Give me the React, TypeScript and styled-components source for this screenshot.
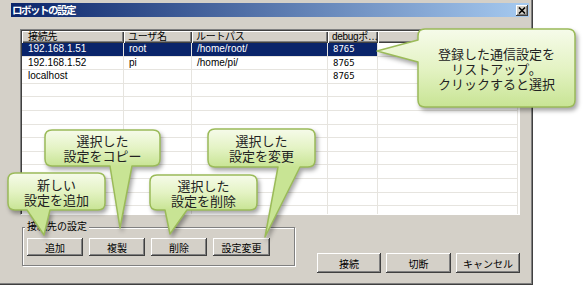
import { Fragment } from "react";
import styled, { createGlobalStyle } from "styled-components";

const GlobalStyle = createGlobalStyle`
  html, body {
    margin: 0;
    padding: 0;
    background: #ffffff;
    overflow: hidden;
  }
  body {
    font-family: "Liberation Sans", "Noto Sans CJK JP", sans-serif;
  }
`;

interface Entry {
  host: string;
  user: string;
  path: string;
  port: string;
}

const entries: Entry[] = [
  { host: "192.168.1.51", user: "root", path: "/home/root/", port: "8765" },
  { host: "192.168.1.52", user: "pi", path: "/home/pi/", port: "8765" },
  { host: "localhost", user: "", path: "", port: "8765" },
];

const columns = ["接続先", "ユーザ名", "ルートパス", "debugポ…", ""];
const EMPTY_ROWS = 10;

interface CalloutSpec {
  x: number;
  y: number;
  w: number;
  h: number;
  side: "left" | "bottom";
  a: number;
  b: number;
  tip: [number, number];
  lines: string[];
}

const callouts: CalloutSpec[] = [
  {
    x: 418, y: 29, w: 157, h: 78, side: "left", a: 11, b: 33, tip: [-41, 22],
    lines: ["登録した通信設定を", "リストアップ。", "クリックすると選択"],
  },
  {
    x: 45, y: 130, w: 115, h: 36, side: "bottom", a: 65, b: 87, tip: [75, 98],
    lines: ["選択した", "設定をコピー"],
  },
  {
    x: 208, y: 129, w: 107, h: 38, side: "bottom", a: 70, b: 92, tip: [57, 108],
    lines: ["選択した", "設定を変更"],
  },
  {
    x: 8, y: 173, w: 97, h: 37, side: "bottom", a: 19, b: 42, tip: [36, 62],
    lines: ["新しい", "設定を追加"],
  },
  {
    x: 150, y: 175, w: 107, h: 35, side: "bottom", a: 15, b: 37, tip: [20, 59],
    lines: ["選択した", "設定を削除"],
  },
];

// rounded box with a pointer tail
const bubblePath = ({ w, h, side, a, b, tip }: CalloutSpec, r = 7) => {
  const [tx, ty] = tip;
  const top = `M${r},0 H${w - r} Q${w},0 ${w},${r} V${h - r} Q${w},${h} ${w - r},${h}`;
  if (side === "bottom") {
    return `${top} H${b} L${tx},${ty} L${a},${h} H${r} Q0,${h} 0,${h - r} V${r} Q0,0 ${r},0 Z`;
  }
  return `${top} H${r} Q0,${h} 0,${h - r} V${b} L${tx},${ty} L0,${a} V${r} Q0,0 ${r},0 Z`;
};

const Callout = ({ spec, id }: { spec: CalloutSpec; id: string }) => (
  <Bubble $x={spec.x} $y={spec.y} $w={spec.w} $h={spec.h}>
    <BubbleShape width={spec.w} height={spec.h}>
      <defs>
        <linearGradient id={id} x1="0" y1="0" x2="0" y2={spec.h} gradientUnits="userSpaceOnUse">
          <stop offset="0" stopColor="#f6fbea" />
          <stop offset="0.5" stopColor="#e4f3c4" />
          <stop offset="1" stopColor="#c8e494" />
        </linearGradient>
      </defs>
      <path d={bubblePath(spec)} fill={`url(#${id})`} stroke="#9bbb59" strokeWidth="1.5" strokeLinejoin="round" />
    </BubbleShape>
    <BubbleText>
      {spec.lines.map((line, i) => (
        <Fragment key={line}>
          {i > 0 && <br />}
          {line}
        </Fragment>
      ))}
    </BubbleText>
  </Bubble>
);

const CloseIcon = () => (
  <svg width="8" height="7" viewBox="0 0 8 7">
    <path d="M1 0.5 L7 6.5 M7 0.5 L1 6.5" stroke="#000" strokeWidth="1.6" />
  </svg>
);

const App = () => {
  return (
    <>
      <GlobalStyle />
      <Window>
        <TitleBar>
          <Title>ロボットの設定</Title>
          <CloseButton>
            <CloseIcon />
          </CloseButton>
        </TitleBar>

        <ListView>
          <HeaderRow>
            {columns.map((c, i) => (
              <HeaderCell key={i} $first={i === 0}>
                {c}
              </HeaderCell>
            ))}
          </HeaderRow>
          {entries.map((e, r) => (
            <Row key={e.host}>
              <Cell $first $selected={r === 0}>{e.host}</Cell>
              <Cell $selected={r === 0}>{e.user}</Cell>
              <Cell $selected={r === 0}>{e.path}</Cell>
              <Cell $selected={r === 0} $mono>{e.port}</Cell>
              <Cell />
            </Row>
          ))}
          {Array.from({ length: EMPTY_ROWS }).map((_, r) => (
            <Row key={`empty-${r}`}>
              <Cell $first />
              <Cell />
              <Cell />
              <Cell />
              <Cell />
            </Row>
          ))}
        </ListView>

        <BottomArea>
          <GroupBox>
            <GroupLabel>接続先の設定</GroupLabel>
            <GroupButtons>
              <WinButton $w={56} $h={18}>追加</WinButton>
              <WinButton $w={56} $h={18}>複製</WinButton>
              <WinButton $w={56} $h={18}>削除</WinButton>
              <WinButton $w={57} $h={18}>設定変更</WinButton>
            </GroupButtons>
          </GroupBox>
          <DialogButtons>
            <WinButton $w={64} $h={20}>接続</WinButton>
            <WinButton $w={65} $h={20}>切断</WinButton>
            <WinButton $w={64} $h={20}>キャンセル</WinButton>
          </DialogButtons>
        </BottomArea>

        {callouts.map((c, i) => (
          <Callout key={i} spec={c} id={`bubble-grad-${i}`} />
        ))}
      </Window>
    </>
  );
};

export default App;

const Window = styled.div`
  position: relative;
  width: 533px;
  height: 285px;
  background: #d4d0c8;
  box-shadow: inset -1px -1px 0 #404040, inset -2px -2px 0 #808080;
  display: flex;
  flex-direction: column;
`;

const TitleBar = styled.div`
  margin: 3px 4px 0 11px;
  height: 14px;
  background: linear-gradient(to right, #0a246a, #a6caf0);
  display: flex;
  align-items: center;
  justify-content: space-between;
  padding: 0 1px 0 1px;
`;

const Title = styled.span`
  color: #ffffff;
  font-family: "Noto Sans CJK JP", sans-serif;
  font-size: 10.5px;
  font-weight: 700;
  letter-spacing: -1.5px;
  line-height: 14px;
`;

const CloseButton = styled.div`
  width: 12px;
  height: 11px;
  background: #d4d0c8;
  box-shadow: inset -1px -1px 0 #404040, inset 1px 1px 0 #ffffff, inset -2px -2px 0 #808080;
  display: flex;
  align-items: center;
  justify-content: center;
`;

const ListView = styled.div`
  margin: 12px 0 0 20px;
  width: 500px;
  height: 186px;
  box-sizing: border-box;
  border: 1px solid;
  border-color: #808080 #ffffff #ffffff #808080;
  box-shadow: inset 1px 1px 0 #404040;
  padding: 1px 1px 0 1px;
  background: #ffffff;
  overflow: hidden;
`;

const gridColumns = `
  display: grid;
  grid-template-columns: 102px 68px 136px 50px 140px;
`;

const HeaderRow = styled.div`
  ${gridColumns}
  height: 12px;
`;

const HeaderCell = styled.div<{ $first?: boolean }>`
  box-sizing: border-box;
  background: #d4d0c8;
  box-shadow: inset 1px 1px 0 #ffffff, inset -1px -1px 0 #404040, inset -2px -2px 0 #808080;
  padding: 0 0 0 ${({ $first }) => ($first ? 6 : 4)}px;
  font-size: 10px;
  letter-spacing: -0.3px;
  line-height: 12px;
  color: #000000;
  white-space: nowrap;
`;

const Row = styled.div`
  ${gridColumns}
  height: 13.6px;
`;

const Cell = styled.div<{ $first?: boolean; $selected?: boolean; $mono?: boolean }>`
  box-sizing: border-box;
  border-right: 1px solid #e6e4df;
  border-bottom: 1px solid #e6e4df;
  padding: 0 4px 0 ${({ $first }) => ($first ? 6 : 5)}px;
  background: ${({ $selected }) => ($selected ? "#0a246a" : "#ffffff")};
  color: ${({ $selected }) => ($selected ? "#ffffff" : "#000000")};
  font-family: ${({ $mono }) =>
    $mono ? `"DejaVu Sans Mono", monospace` : `"Liberation Sans", "Noto Sans CJK JP", sans-serif`};
  font-size: ${({ $mono }) => ($mono ? 9 : 10)}px;
  line-height: 12.6px;
  white-space: nowrap;
  overflow: hidden;
`;

const BottomArea = styled.div`
  display: flex;
  align-items: flex-start;
  margin-top: 12px;
  padding: 0 13px 0 22px;
`;

const GroupBox = styled.div`
  position: relative;
  width: 273px;
  height: 39px;
  box-sizing: border-box;
  border: 1px solid #808080;
  box-shadow: inset 1px 1px 0 #ffffff, 1px 1px 0 #ffffff;
  padding: 10px 0 0 4px;
`;

const GroupLabel = styled.span`
  position: absolute;
  top: -7px;
  left: 2px;
  padding: 0 2px;
  background: #d4d0c8;
  font-size: 10px;
  line-height: 12px;
  color: #000000;
`;

const GroupButtons = styled.div`
  display: flex;
  gap: 6px;
`;

const DialogButtons = styled.div`
  display: flex;
  gap: 5px;
  margin: 26px 0 0 auto;
`;

const WinButton = styled.button<{ $w: number; $h: number }>`
  width: ${({ $w }) => $w}px;
  height: ${({ $h }) => $h}px;
  padding: 0;
  border: none;
  background: #d4d0c8;
  box-shadow: inset -1px -1px 0 #404040, inset 1px 1px 0 #ffffff, inset -2px -2px 0 #808080;
  font-family: "Liberation Sans", "Noto Sans CJK JP", sans-serif;
  font-size: 10px;
  color: #000000;
`;

const Bubble = styled.div<{ $x: number; $y: number; $w: number; $h: number }>`
  position: absolute;
  left: ${({ $x }) => $x}px;
  top: ${({ $y }) => $y}px;
  width: ${({ $w }) => $w}px;
  height: ${({ $h }) => $h}px;
  display: flex;
  align-items: center;
  justify-content: center;
`;

const BubbleShape = styled.svg`
  position: absolute;
  left: 0;
  top: 0;
  overflow: visible;
  filter: drop-shadow(2px 3px 2px rgba(0, 0, 0, 0.35));
`;

const BubbleText = styled.span`
  position: relative;
  font-family: "Noto Sans CJK JP", sans-serif;
  font-size: 13px;
  line-height: 15px;
  color: #222222;
  text-align: center;
  white-space: nowrap;
`;
